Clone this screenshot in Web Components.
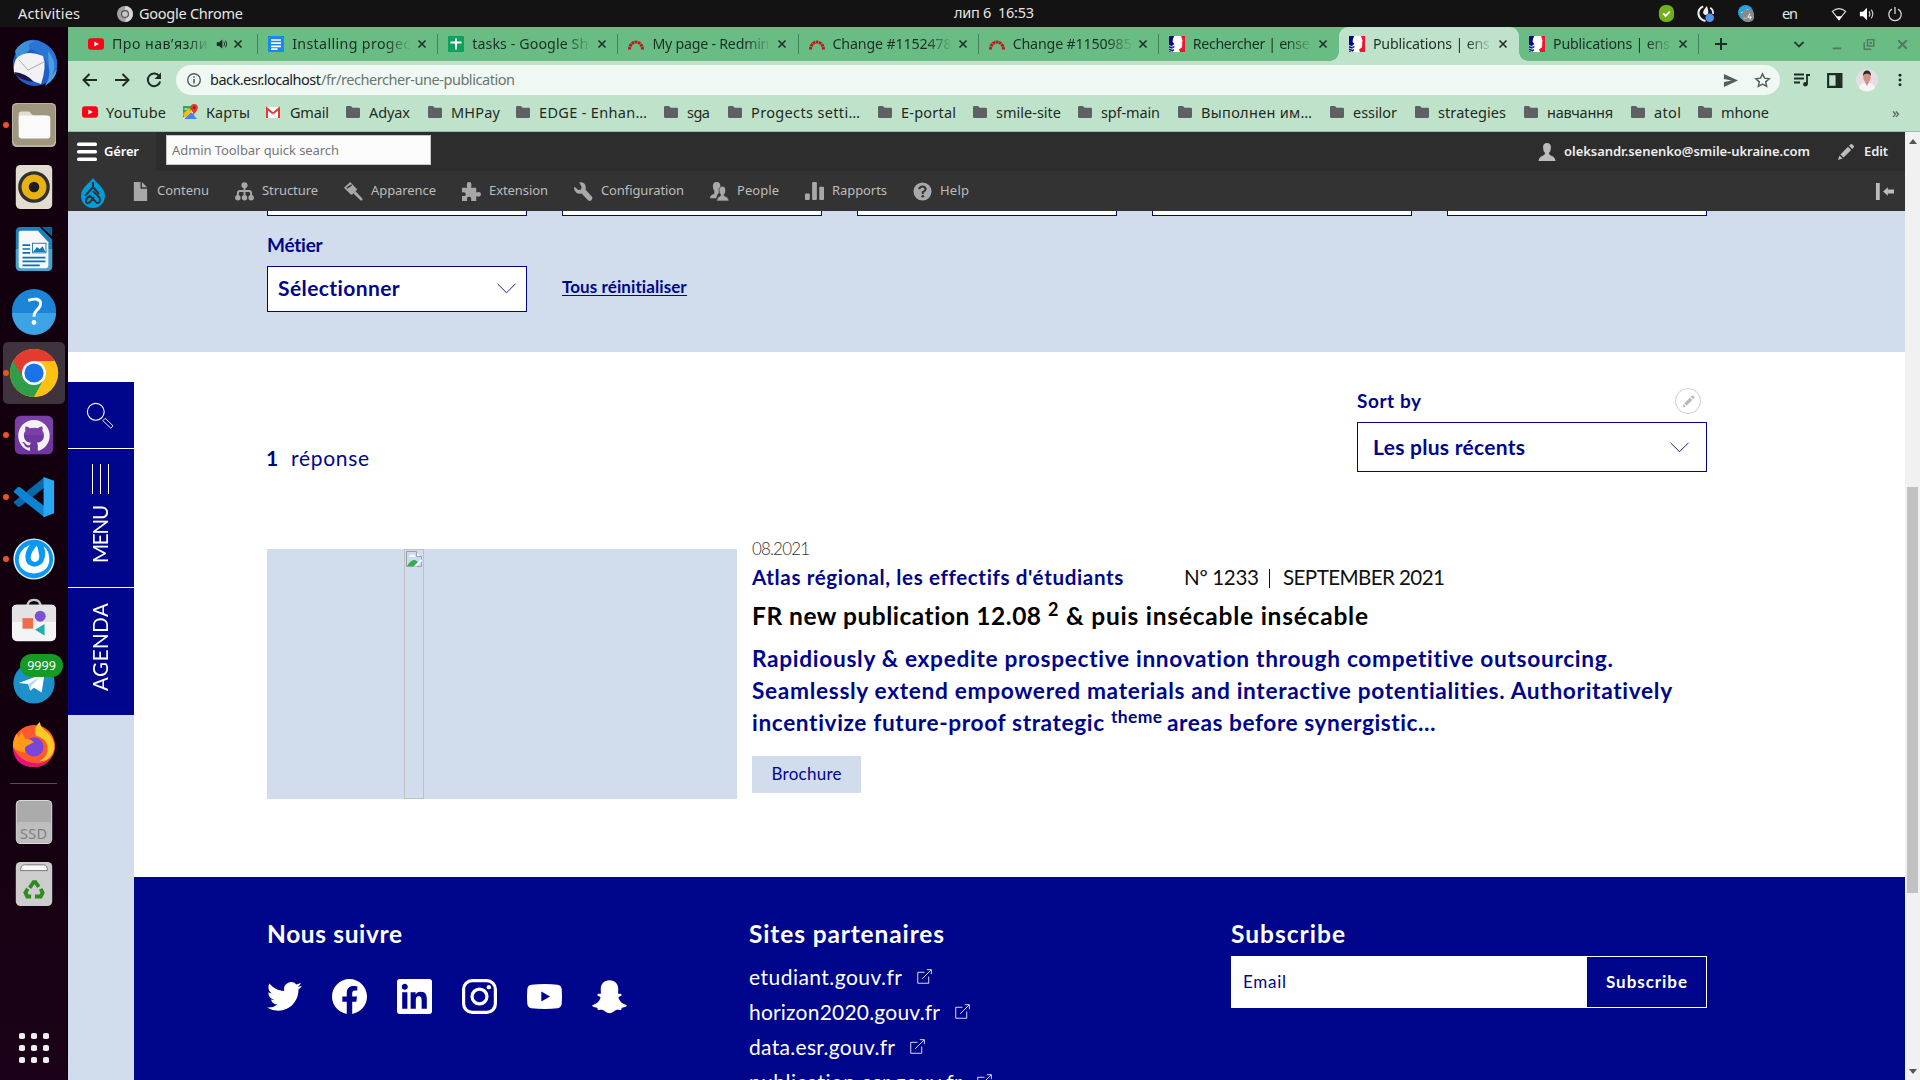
<!DOCTYPE html>
<html lang="fr">
<head>
<meta charset="utf-8">
<title>Publications</title>
<style>
html,body{margin:0;height:100%;overflow:hidden;background:#fff}
body{font-family:"Noto Sans","Liberation Sans",sans-serif}
</style>
</head>
<body>
<desktop-shell></desktop-shell>
<script>
const BLUE='#00068b';
const define=(name,html,after)=>{
  const tpl=document.createElement('template');
  customElements.define(name,class extends HTMLElement{
    connectedCallback(){
      if(this.shadowRoot)return;
      const root=this.attachShadow({mode:'open'});
      tpl.innerHTML=typeof html==='function'?html(this):html;
      root.appendChild(tpl.content.cloneNode(true));
      if(after)after(this,root);
    }
  });
};

/* Text run tracked to an exact advance width given by its w attribute. */
const ctx=document.createElement('canvas').getContext('2d');
define('fit-text','<style>:host{display:inline-block;white-space:pre;flex:none}</style><slot></slot>',el=>{
  const w=+el.getAttribute('w'),s=getComputedStyle(el),t=el.textContent;
  ctx.font=`${s.fontWeight} ${s.fontSize} ${s.fontFamily}`;
  el.style.letterSpacing=((w-ctx.measureText(t).width)/Math.max(1,t.length-1)).toFixed(3)+'px';
  if(!el.hasAttribute('vertical'))el.style.width=w+'px';else el.style.height=w+'px';
});

const folder='<path d="M1 3.2Q1 2 2.2 2H6l1.6 1.8h6.2Q15 3.8 15 5v7.800Q15 14 13.800 14H2.200Q1 14 1 12.800z" fill="#5f6064"/>';
const marianne='<path fill="#fff" d="M0 0h16v16H0z"/><path fill="#00068b" d="M0 0h5.200Q3.500 3 3.600 6L5.500 8 3 9.500 6 11 3 12.500 5.500 14 3 16H0z"/><path fill="#f0142f" d="M12 0h4v16h-5l-1-2.500 2.800-2 .5-3-.3-1.500.6-2.500z"/><path d="M0 9.500l4 1.500M0 12l4 1.500M0 14.500l3 1" stroke="#fff" stroke-width=".8"/>';
const redmine='<path d="M1.500 13.500a6.500 7.500 0 0 1 13 0" fill="none" stroke="#c9101d" stroke-width="3" stroke-dasharray="2.600 .6"/>';
const yt='<rect x="0" y="2.200" width="16" height="11.600" rx="3" fill="#ff0016"/><path fill="#fff" d="M6.300 5.400v5.200L10.800 8z"/>';
const pencil='<path d="M2 18l1.400-4.600 3.200 3.200zM4.400 12.400L12 4.800l3.200 3.200-7.600 7.600zM13 3.800l1.400-1.400q1-1 2 0l1.200 1.200q1 1 0 2L16.200 7z" fill="currentColor"/>';
const S='fill="none" stroke="currentColor"';
const I={
youtube:[16,yt],folder:[16,folder],marianne:[16,marianne],redmine:[16,redmine],
docs:[16,'<rect width="16" height="16" rx="1" fill="#1a87f0"/><path d="M3 4h10M3 7.200h10M3 10.400h10M3 13.200h6.500" stroke="#fff" stroke-width="1.700"/>'],
sheets:[16,'<rect width="16" height="16" rx="1" fill="#0fa25c"/><path d="M8 2.500v11M2.500 6.500h11" stroke="#fff" stroke-width="2"/>'],
maps:[16,'<path fill="#34a853" d="M1 2h9l3 13H1z"/><path d="M1 14L12 4l2 2-9 9H1z" fill="#fff"/><path d="M2 15L9 8l6 7z" fill="#4285f4"/><path d="M1 10l6-6 3 3-7 7z" fill="#fbbc05"/><path d="M12.200 0a3.600 3.600 0 0 1 3.600 3.600C15.800 6.500 12.200 10 12.200 10S8.600 6.500 8.600 3.600A3.600 3.600 0 0 1 12.200 0z" fill="#e33b2e"/><circle cx="12.200" cy="3.600" r="1.300" fill="#8c1a12"/><path d="M2.500 5h3" stroke="#fff"/>'],
gmail:[16,'<path fill="#fff" d="M1 3h14v11H1z"/><path d="M2 14V4.500l6 5 6-5V14" fill="none" stroke="#e53b32" stroke-width="2"/><path d="M3.500 13.500L8 9.500l4.500 4" fill="none" stroke="#ddd" stroke-width=".6"/>'],
sound:[16,'<path d="M1 5.500h3L8.500 2v12L4 10.500H1z" fill="currentColor"/><path d="M10.500 5q2 3 0 6M12.800 3.500q3 4.500 0 9" '+S+' stroke-width="1.300"/>'],
close:[16,'<path d="M4 4l8 8M12 4l-8 8" '+S+' stroke-width="1.900"/>'],
plus:[16,'<path d="M8 2v12M2 8h12" '+S+' stroke-width="2"/>'],
chev:[16,'<path d="M3.500 6l4.500 4.500L12.500 6" '+S+' stroke-width="1.800"/>'],
min:[16,'<path d="M3 13h10" '+S+' stroke-width="2"/>'],
restore:[16,'<path d="M6.200 3h7.300v7.300H6.200zM2.500 6v8h8" '+S+' stroke-width="1.700"/><path d="M8.700 5.500h2.500v2.500H8.700z" fill="currentColor"/>'],
back:[20,'<path d="M17 10H4M9.500 4L3.500 10l6 6" '+S+' stroke-width="2"/>'],
fwd:[20,'<path d="M3 10h13M10.500 4l6 6-6 6" '+S+' stroke-width="2"/>'],
reload:[20,'<path d="M15.500 6.500A6.300 6.300 0 1 0 16.200 11.500" '+S+' stroke-width="2"/><path d="M17 2.500v6.500h-6.500z" fill="currentColor"/>'],
info:[16,'<circle cx="8" cy="8" r="6.300" '+S+' stroke-width="1.400"/><path d="M8 7v4.500M8 4.200v1.600" '+S+' stroke-width="1.600"/>'],
send:[16,'<path d="M1 1l15 7-15 7V9.500L9 8 1 6.500z" fill="currentColor"/>'],
star:[16,'<path d="M8 1.800l1.900 4 4.400.5-3.300 3 .9 4.300L8 11.500l-3.900 2.100.9-4.300-3.300-3 4.400-.5z" '+S+' stroke-width="1.400"/>'],
playlist:[16,'<path d="M0 2.500h10M0 6.500h10M0 10.500h6M13 12V3h3" '+S+' stroke-width="1.800"/><circle cx="11.400" cy="12.200" r="2.300" fill="currentColor"/>'],
panel:[16,'<path d="M2 2h12.500v12H2z" '+S+' stroke-width="2"/><path d="M9 2h5v12H9z" fill="currentColor"/>'],
dots:[16,'<g fill="currentColor"><circle cx="8" cy="2.500" r="1.700"/><circle cx="8" cy="8" r="1.700"/><circle cx="8" cy="13.500" r="1.700"/></g>'],
avatar:[22,'<circle cx="11" cy="11" r="11" fill="#e6dce4"/><path d="M3 19q1-4 5-5h6q4 1 5 5A11 11 0 0 1 3 19z" fill="#f7f4f6"/><ellipse cx="11" cy="8.500" rx="3.700" ry="5" fill="#d5917f"/><path d="M7 7q0-5.500 4-5.500T15 7q-1-2.500-4-2.500T7 7z" fill="#332629"/><path d="M9 13h4l-2 4z" fill="#cf8c7c"/>'],
chromegrey:[18,'<circle cx="9" cy="9" r="9" fill="#a2a2a2"/><path d="M9 0a9 9 0 0 1 8 5H9zM9 18a9 9 0 0 0 8-13h-5z" fill="#d5d5d5"/><circle cx="9" cy="9" r="4.600" fill="#555"/><circle cx="9" cy="9" r="3.200" fill="#c6c6c6"/>'],
skype:[18,'<rect x="1" y="0" width="16" height="18" rx="7" fill="#6fb01c"/><path d="M5.500 9l2.500 2.500 4.500-4.500" fill="none" stroke="#fff" stroke-width="2"/>'],
mattray:[18,'<path d="M6.500 1.500Q1 4 1.500 9.500 2.500 15.500 9 17" fill="none" stroke="#eee" stroke-width="2.200"/><path d="M10.500 1Q6 6 6.500 8.500q.8 2.300 3 2 2.500-.3 2.500-3Q12 5 10.500 1z" fill="#eee"/><path d="M14 3q3.500 2.500 3 6.500" fill="none" stroke="#eee" stroke-width="2"/><circle cx="13.500" cy="13.500" r="4.500" fill="#5294f5"/>'],
teletray:[18,'<circle cx="8" cy="8" r="8" fill="#27a3dc"/><path d="M3 8l8-4-2 8-3-2z" fill="#fff"/><rect x="4" y="5" width="13" height="13" rx="5" fill="#868a8c"/><path d="M6 14h1M8 14h1" stroke="#fff" stroke-width="1"/><path d="M12.500 9l-2 4h4M13 11.500v3.500" fill="none" stroke="#fff"/>'],
wifi:[18,'<path d="M1.500 6Q9 0 16.500 6L9 15.500z" fill="none" stroke="#ddd" stroke-width="1.300"/><path d="M5.500 11.500h7L9 16z" fill="#fff"/>'],
vol:[18,'<path d="M1 6.500h3.500L9 2v14l-4.500-4.500H1z" fill="#fff"/><path d="M11.300 6q2 3 0 6M13.800 4q3.400 5 0 10" fill="none" stroke="#ccc" stroke-width="1.300"/>'],
power:[18,'<path d="M5.500 3.500a7 7 0 1 0 7 0M9 1v8" fill="none" stroke="#ddd" stroke-width="1.400"/>'],
burger:[20,'<g fill="#fff"><rect y=".5" width="20" height="3.600" rx="1.500"/><rect y="8" width="20" height="3.600" rx="1.500"/><rect y="15.500" width="20" height="3.600" rx="1.500"/></g>'],
user:[20,'<path d="M10 0q4.400 0 4.400 5 0 4-2.200 6 0 2.500 2.500 3.200Q19 15.600 19.500 20H.5Q1 15.600 5.300 14.200q2.500-.7 2.500-3.200-2.200-2-2.200-6Q5.600 0 10 0z" fill="currentColor"/>'],
pencil:[20,pencil],
drupal:[30,'<path d="M15 0c2 4 12 9 12 18a12 12 0 0 1-24 0C3 9 13 4 15 0z" fill="#009cde"/><path d="M15 4v5l6 7M15 9l-8 9M15 13c2 3 7 5 7 9 0 3-3 4-4 2l-6-6c-2 1-4 3-4 5 0 2 2 3 4 1l4-5" fill="none" stroke="#333" stroke-width="2"/>'],
content:[20,'<path d="M3 0h7v7h7v13H3zM11.500 0L17 5.500h-5.500z" fill="currentColor"/>'],
structure:[20,'<circle cx="10" cy="3.400" r="3.200" fill="currentColor"/><path d="M10 5v10M3 15v-3q0-2.500 2.500-2.500h9Q17 9.500 17 12v3" '+S+' stroke-width="2"/><g fill="currentColor"><circle cx="3" cy="16.500" r="2.900"/><circle cx="10" cy="16.500" r="2.900"/><circle cx="17" cy="16.500" r="2.900"/></g>'],
appearance:[20,'<path d="M0 6L6.500 0 14 8l-5.500 5.500q-2-.5-3-2z" fill="currentColor"/><path d="M3 6.500L8 3" stroke="#333" stroke-width="1.500"/><path d="M10 12l2-2.500 7.500 8q.5 2.500-2 2z" fill="currentColor"/>'],
extension:[20,'<path d="M0 6h5.500Q4 0 7.500 0T9.500 6H15v5q5-1.500 5 2t-5 2v5H9.500q1-4.500-2-4.500T5.500 20H0v-5.500q4 1 4-1.700T0 11z" fill="currentColor"/>'],
config:[20,'<path d="M5.500.5q6-1 7 5 0 1.500-.5 2.500l7 7.500q1 2-.5 3.500t-3.500.5L8 12q-6 1.500-8-5 0-1.500.5-2l4 3.500 3-.5.500-3z" fill="currentColor"/>'],
people:[20,'<path d="M7 0q4 0 4 4.500 0 2.500-1.500 4.500v2l-2 3-1 3H0q0-3.500 4.500-4.500V9Q3 7.500 3 4.500 3 0 7 0z" fill="currentColor"/><path d="M13 4.500q3.500 0 3.500 4.500 0 2.500-1.500 4v1.500q4.500 1 5 5.500H7q0-4 4-5.500V13Q9.500 11.500 9.500 9 9.500 4.500 13 4.500z" fill="currentColor" stroke="#333" stroke-width=".7"/>'],
reports:[20,'<g fill="currentColor"><rect y="12" width="5" height="7" rx="1"/><rect x="7.500" y="0" width="5" height="19" rx="1"/><rect x="15" y="5" width="5" height="14" rx="1"/></g>'],
help:[20,'<circle cx="10" cy="10" r="9.500" fill="currentColor"/><path d="M6.500 7.500Q7 4.700 10 4.700T13.300 7.500Q13.300 9 10.300 10.700V12.500" fill="none" stroke="#333" stroke-width="2.200"/><circle cx="10.300" cy="15" r="1.400" fill="#333"/>'],
collapse:[20,'<path d="M1 1h4v18H1zM8.500 10l5-4.500V8H20v4h-6.500v2.500z" fill="currentColor"/>'],
chevthin:[20,'<path d="M.5 5l9.500 9.500L19.500 5" '+S+' stroke-width=".95"/>'],
search:[30,'<circle cx="10.500" cy="10.500" r="9" fill="none" stroke="#fff" stroke-width="1.200"/><path d="M18 20l2.500-2.500 8.500 8-2.500 2.500z" fill="none" stroke="#fff"/>'],
broken:[16,'<path d="M.5.500h10l5 5v10H.5z" fill="#c9dcf7" stroke="#9aa0a6"/><path d="M10.500.5v5h5" fill="#fff" stroke="#9aa0a6"/><path d="M3 6q0-2 2-2 2-1.500 3 .5 1.500 0 1.500 1.500z" fill="#fff"/><path d="M1 15q4-7 8-6l3 2-4 4z" fill="#37ad4b"/><path d="M15.500 8L8 15.500h2.500L16 10z" fill="#fff"/>'],
ext:[16,'<path d="M8 3.500H.8v11.700h11.700V8M5.500 10.500L15 1M10.500.7h4.800v4.800" fill="none" stroke="#fff" stroke-width=".9"/>'],
twitter:[24,'<path fill="#fff" d="M23.953 4.570a10 10 0 01-2.825.775 4.958 4.958 0 002.163-2.723c-.951.555-2.005.959-3.127 1.184a4.920 4.920 0 00-8.384 4.482C7.690 8.095 4.067 6.130 1.640 3.162a4.822 4.822 0 00-.666 2.475c0 1.710.87 3.213 2.188 4.096a4.904 4.904 0 01-2.228-.616v.06a4.923 4.923 0 003.946 4.827 4.996 4.996 0 01-2.212.085 4.936 4.936 0 004.604 3.417 9.867 9.867 0 01-6.102 2.105c-.39 0-.779-.023-1.170-.067a13.995 13.995 0 007.557 2.209c9.053 0 13.998-7.496 13.998-13.985 0-.21 0-.42-.015-.63A9.935 9.935 0 0024 4.590z"/>'],
facebook:[24,'<path fill="#fff" d="M24 12.073c0-6.627-5.373-12-12-12s-12 5.373-12 12c0 5.990 4.388 10.954 10.125 11.854v-8.385H7.078v-3.470h3.047V9.430c0-3.007 1.792-4.669 4.533-4.669 1.312 0 2.686.235 2.686.235v2.953H15.830c-1.491 0-1.956.925-1.956 1.874v2.250h3.328l-.532 3.470h-2.796v8.385C19.612 23.027 24 18.062 24 12.073z"/>'],
linkedin:[24,'<path fill="#fff" d="M20.447 20.452h-3.554v-5.569c0-1.328-.027-3.037-1.852-3.037-1.853 0-2.136 1.445-2.136 2.939v5.667H9.351V9h3.414v1.561h.046c.477-.9 1.637-1.850 3.370-1.850 3.601 0 4.267 2.370 4.267 5.455v6.286zM5.337 7.433c-1.144 0-2.063-.926-2.063-2.065 0-1.138.92-2.063 2.063-2.063 1.140 0 2.064.925 2.064 2.063 0 1.139-.925 2.065-2.064 2.065zm1.782 13.019H3.555V9h3.564v11.452zM22.225 0H1.771C.792 0 0 .774 0 1.729v20.542C0 23.227.792 24 1.771 24h20.451C23.200 24 24 23.227 24 22.271V1.729C24 .774 23.200 0 22.222 0h.003z"/>'],
instagram:[24,'<rect x="1.100" y="1.100" width="21.800" height="21.800" rx="6" fill="none" stroke="#fff" stroke-width="2.200"/><circle cx="12" cy="12" r="5.100" fill="none" stroke="#fff" stroke-width="2.200"/><circle cx="18.400" cy="5.600" r="1.500" fill="#fff"/>'],
youtubew:[24,'<path fill="#fff" fill-rule="evenodd" d="M3 4Q12 3 21 4q2.500.3 2.800 3 .4 5 0 10-.3 2.700-2.800 3-9 1-18 0Q.5 19.700.2 17-.2 12 .2 7 .5 4.300 3 4zM9.800 8.500v7l6-3.500z"/>'],
snapchat:[24,'<path fill="#fff" d="M12 .8c3.800 0 6 2.600 6 6l-.1 3.300c.8.300 1.500-.3 2.100.1.800.6 0 1.400-1 1.800-.8.300-1 .7-.6 1.600 1 2.300 2.700 3.600 5 4.200.6.200.5.700 0 1-.8.500-2 .7-2.900.9-.4.300-.2 1.200-.7 1.500-.9.300-2-.3-3.200.1-1.500.6-2.500 2.200-4.600 2.200s-3.100-1.600-4.600-2.200c-1.200-.4-2.300.2-3.200-.1-.5-.3-.3-1.200-.7-1.500-.9-.2-2.100-.4-2.900-.9-.5-.3-.6-.8 0-1 2.300-.6 4-1.900 5-4.200.4-.9.200-1.300-.6-1.600-1-.4-1.800-1.200-1-1.800.6-.4 1.300.2 2.100-.1L6 6.800c0-3.400 2.200-6 6-6z"/>'],
/* Dock applications, each drawn on a 48 unit canvas */
thunderbird:[48,'<circle cx="25" cy="25" r="22" fill="#1f5fc4"/><path d="M14 3q10-5 20 1 14 8 13 24-1 13-12 18 6-8 4-16-3-14-18-20l-9-2z" fill="#2a74d6"/><path d="M38 12q10 12 4 24l5-6q-1 10-12 17 6-10 4-18z" fill="#4a9fe2"/><path d="M5 12Q12 0 25 2q-8 2-6 6 2 3-2 5-5 2-9 12z" fill="#3c91d8"/><path d="M6 20Q16 10 33 17q4 10-2 28-14-4-27-11-1-8 2-14z" fill="#f2f2f4"/><path d="M9 21l9 10 16-8" fill="none" stroke="#a9a9b0"/><path d="M4 33q12 1 20 10-16-2-20-10z" fill="#211245"/>'],
files:[48,'<rect x="1" y="1" width="46" height="46" rx="5" fill="#bdb6a3"/><rect x="2" y="2" width="44" height="43" rx="5" fill="#9e967f"/><path d="M8 13q0-3 3-3h8l4 4h13v8H8z" fill="#e3ded0"/><rect x="8" y="14" width="33" height="24" rx="3" fill="#fafafa"/>'],
rhythm:[48,'<rect x="5" y="1" width="38" height="46" rx="5" fill="#e2ddcf"/><circle cx="24" cy="24" r="16.500" fill="#2f2f35"/><circle cx="24" cy="24" r="13" fill="#e8b310"/><circle cx="24" cy="24" r="5.500" fill="#1d1d1f"/>'],
writer:[48,'<path d="M10 1h20l13 13v28q0 5-5 5H10q-5 0-5-5V6q0-5 5-5z" fill="#1b82b8"/><path d="M5 24h38v18q0 5-5 5H10q-5 0-5-5z" fill="#48a3cf"/><path d="M10 5h18l11 12v24q0 3-3 3H11q-3 0-3-3V8q0-3 2-3z" fill="#f8f8f8"/><path d="M32 1h11v10z" fill="#0e6496"/><path d="M12 20h8M12 24h8M12 28h8M12 33h24M12 37h24M12 41h18" stroke="#0b72b2" stroke-width="1.800"/><rect x="22.500" y="18" width="14" height="10" fill="#fff" stroke="#1a7bb4"/><path d="M23 27l4-5 3 2 3-3 3 6z" fill="#1a7bb4"/>'],
helpapp:[48,'<circle cx="24" cy="24" r="23" fill="#1c84d6"/><path d="M1 26h46a23 23 0 0 1-46 0z" fill="#3ba3e6"/><path d="M18 13q12-4 13 3 0 4-4 7-3 3-3 7" fill="none" stroke="#fff" stroke-width="3"/><circle cx="24" cy="36" r="2.500" fill="#fff"/>'],
chrome:[48,'<circle cx="24" cy="24" r="24" fill="#f7bb16"/><path d="M24 24L3.200 12a24 24 0 0 0 21 36l10-18z" fill="#2e9e4b"/><path d="M3.200 12a24 24 0 0 1 41.600 0H24L14 30z" fill="#e33b2e"/><path d="M24 12h20.800A24 24 0 0 1 24 48l10-18z" fill="#fcc112"/><circle cx="24" cy="24" r="12" fill="#fff"/><circle cx="24" cy="24" r="9.600" fill="#1a73e8"/>'],
github:[48,'<rect x="4" y="4" width="40" height="40" rx="6" fill="#7b3fa8"/><path d="M4 24h40v14q0 6-6 6H10q-6 0-6-6z" fill="#683298" opacity=".6"/><g transform="translate(7.500 8) scale(1.370)"><path fill="#f5f2f5" d="M12 .297c-6.630 0-12 5.373-12 12 0 5.303 3.438 9.800 8.205 11.385.6.113.82-.258.82-.577 0-.285-.01-1.040-.015-2.040-3.338.724-4.042-1.610-4.042-1.610C4.422 18.070 3.633 17.700 3.633 17.700c-1.087-.744.084-.729.084-.729 1.205.084 1.838 1.236 1.838 1.236 1.070 1.835 2.809 1.305 3.495.998.108-.776.417-1.305.76-1.605-2.665-.3-5.466-1.332-5.466-5.930 0-1.310.465-2.380 1.235-3.220-.135-.303-.54-1.523.105-3.176 0 0 1.005-.322 3.300 1.230.96-.267 1.980-.399 3-.405 1.020.006 2.040.138 3 .405 2.280-1.552 3.285-1.230 3.285-1.230.645 1.653.24 2.873.12 3.176.765.84 1.230 1.910 1.230 3.220 0 4.610-2.805 5.625-5.475 5.920.42.36.81 1.096.81 2.220 0 1.606-.015 2.896-.015 3.286 0 .315.21.69.825.57C20.565 22.092 24 17.592 24 12.297c0-6.627-5.373-12-12-12"/></g>'],
vscode:[48,'<path d="M3 18l4-4q1-1 2.500 0L35 34v11L3 19z" fill="#0d83d1"/><path d="M3 30l4 4q1 1 2.500 0L35 14V3L3 29z" fill="#0868ab"/><path d="M3 18l4-4q1-1 2.500 0L22 24 35 34v11L12 27z" fill="#0d83d1"/><path d="M34 3l11 4v34l-11 4z" fill="#2ba8f2"/>'],
matter:[48,'<circle cx="24" cy="24" r="21.500" fill="#e8eef2"/><circle cx="24" cy="24" r="20" fill="#0a98f5"/><path d="M20 9Q8 14 8 25q1 13 16 14 15-1 16-14 0-10-6-14 3 7 1 12-2 9-11 9-9-1-9-10 0-7 5-13z" fill="#fff"/><path d="M27 10q-7 8-6.500 13 .8 4 4.500 4 4.500-.5 4.500-5.500 0-3-2.500-11.500z" fill="#fff"/>'],
software:[48,'<path d="M17 10q0-8 7-8t7 8" fill="none" stroke="#c5c5c5" stroke-width="2.500"/><rect x="1" y="7" width="46" height="38" rx="5" fill="#f4f4f4"/><path d="M1 25V12q0-5 5-5h36q5 0 5 5v13z" fill="#e3e3e3"/><rect x="12" y="21" width="11" height="11" fill="#f26a4c"/><circle cx="30.500" cy="19" r="5.700" fill="#7b4fd6"/><path d="M35 27v12l-10-6z" fill="#22adb2"/>'],
telegram:[48,'<circle cx="24" cy="24" r="21.500" fill="#1b90cb"/><path d="M8 24L35 14l-3 20-8-5-4 3-2-7z" fill="#fff"/><path d="M18 25l13-8-10 10-1 5z" fill="#bcd9ea"/>'],
firefox:[48,'<circle cx="24" cy="25" r="22" fill="#ff5a2c"/><path d="M2 26q1 21 22 21 14 0 20-13-6 9-16 9Q10 43 2 26z" fill="#e8127c"/><path d="M26 14q-3-8 4-14 1 6 7 10 9 7 8 18-3 13-15 13 10-6 8-16-2-8-12-11z" fill="#ffc928"/><circle cx="24" cy="26" r="10" fill="#7a46d8"/><path d="M2 26q0-9 4-14l2 4 3-6 4 8q5-1 9 3l-6 3q-5 2-3 8-9-1-13-6z" fill="#ff9a1a"/>'],
ssd:[48,'<rect x="5" y="1" width="38" height="46" rx="5" fill="#d9d9d9"/><rect x="6" y="2" width="36" height="44" rx="4" fill="#ababab"/><rect x="6" y="24" width="36" height="22" rx="4" fill="#bebebe"/>'],
trash:[48,'<rect x="5" y="1" width="38" height="46" rx="5" fill="#cdcdcd"/><path d="M10 10q0-6 4-6h20q4 0 4 6z" fill="#f9f9f9" stroke="#777"/><g fill="none" stroke="#2f8a22" stroke-width="4"><path d="M19.500 28l4-6h2l3.500 5"/><path d="M31 29l2 4-2 4h-6"/><path d="M21 37h-4l-2-4 2.500-4"/></g>'],
apps:[48,'<g fill="#efefef">'+[0,1,2].map(y=>[0,1,2].map(x=>`<rect x="${9+x*12}" y="${9+y*12}" width="6" height="6" rx="1.800"/>`).join('')).join('')+'</g>']
};
define('ui-icon',el=>{
  const [v,m]=I[el.getAttribute('name')],s=el.getAttribute('size')||v;
  return `<style>:host{display:block;flex:none;width:${s}px;height:${s}px}svg{display:block;width:100%;height:100%;overflow:visible}</style><svg viewBox="0 0 ${v} ${v}">${m}</svg>`;
});

/* Row cell: a fixed width flex item holding an icon and a tracked label. */
const cell=(x,next,icon,size,gap,text,w)=>`<div class="cell" style="width:${next-x}px"><ui-icon name="${icon}" size="${size}"></ui-icon>${text?`<fit-text w="${w}" style="margin-left:${gap}px">${text}</fit-text>`:''}</div>`;

define('gnome-bar',`<style>
:host{display:flex;align-items:center;height:27px;background:#131313;color:#e6e6e6;font:14.500px/27px "Noto Sans",sans-serif}
.l{display:flex;align-items:center;width:954px;padding-left:18px;box-sizing:border-box}.r{display:flex;align-items:center;margin-left:624px}
fit-text{height:28px}
</style><div class="l"><fit-text w="62">Activities</fit-text><ui-icon name="chromegrey" size="16" style="margin:0 6px 0 37px"></ui-icon><fit-text w="104">Google Chrome</fit-text></div>
<fit-text w="80" style="height:29px">лип 6  16:53</fit-text>
<div class="r"><ui-icon name="skype" size="17"></ui-icon><ui-icon name="mattray" size="17" style="margin-left:22px"></ui-icon><ui-icon name="teletray" size="17" style="margin-left:24px"></ui-icon><fit-text w="16" style="margin-left:27px">en</fit-text><ui-icon name="wifi" size="16" style="margin-left:33px"></ui-icon><ui-icon name="vol" size="16" style="margin-left:12px"></ui-icon><ui-icon name="power" size="16" style="margin-left:12px"></ui-icon></div>`);

const dock=[['thunderbird'],['files',1],['rhythm'],['writer'],['helpapp'],['chrome',1,1],['github',1],['vscode',1],['matter',1],['software'],['telegram'],['firefox']];
define('app-dock',`<style>
:host{display:flex;flex-direction:column;width:68px;height:1053px;box-sizing:border-box;padding-top:5px;background:linear-gradient(#12000e,#13000f 70%,#1b0218);border-right:1px solid #080006}
.s{position:relative;height:62px;display:flex;align-items:center;justify-content:center;border-radius:5px;margin:0 2px 0 3px;flex:none}
.s ui-icon{margin:-1px 1px 0 0}
.on{background:#3f333d}
.d:before{content:"";position:absolute;left:0;top:28px;width:6px;height:6px;border-radius:3px;background:#e95420}
.line{height:1px;margin:7px 10px 7px;background:#5a4c58;flex:none}
.badge{position:absolute;right:2px;top:2px;width:43px;height:23px;border-radius:12px;background:#149a25;color:#fff;font:12.500px/23px "Noto Sans";text-align:center}
.ssd{position:absolute;left:17px;bottom:11px;font:14.500px/18px "Noto Sans";color:#808080}
.apps{margin-top:auto;margin-bottom:1px}
</style>${dock.map(([n,d,on])=>`<div class="s ${d?'d':''} ${on?'on':''}"><ui-icon name="${n}" size="${n==='chrome'||n==='thunderbird'?48:46}"></ui-icon>${n==='telegram'?'<span class="badge">9999</span>':''}</div>`).join('')}<div class="line"></div><div class="s"><ui-icon name="ssd" size="46"></ui-icon><span class="ssd"><fit-text w="27">SSD</fit-text></span></div><div class="s"><ui-icon name="trash" size="46"></ui-icon></div><div class="s apps"><ui-icon name="apps" size="48"></ui-icon></div>`);

const tabs=[['youtube',"Про нав’язлив",104],['docs','Installing progec',118],['sheets','tasks - Google Sh',116],['redmine','My page - Redmin',117],['redmine','Change #1152478',119],['redmine','Change #1150985',119],['marianne','Rechercher | ense',117],['marianne','Publications | ens',117,1],['marianne','Publications | ens',117]];
define('tab-strip',`<style>
:host{display:flex;height:34px;padding-left:10px;background:#69bd84;color:#1f2d26;font:14.200px/34px "Noto Sans",sans-serif}
.t{display:flex;align-items:center;width:180.125px;padding-left:10px;box-sizing:border-box;position:relative;flex:none}
.t:after{content:"";position:absolute;right:0;top:7px;width:1px;height:20px;background:#43835a}
.t.pre:after,.on:after{display:none}
.on{background:#bfe3ca;border-radius:9px 9px 0 0}
.on:before{content:"";position:absolute;left:-9px;right:-9px;bottom:0;height:9px;background:radial-gradient(circle at 0 0,transparent 8.500px,#bfe3ca 9px) left/9px 9px no-repeat,radial-gradient(circle at 100% 0,transparent 8.500px,#bfe3ca 9px) right/9px 9px no-repeat}
.x{width:120px;overflow:hidden;margin-left:8px;flex:none;-webkit-mask:linear-gradient(90deg,#000 78%,transparent);mask:linear-gradient(90deg,#000 78%,transparent)}
.a .x{width:98px}
.c{margin-left:3px}.w{display:flex;align-items:center;color:#55775f}
</style>${tabs.map(([i,t,w,on],k)=>`<div class="t ${on?'on':''} ${k===6?'pre':''} ${k?'':'a'}"><ui-icon name="${i}" size="16"></ui-icon><span class="x"><fit-text w="${w}">${t}</fit-text></span>${k?'':'<ui-icon name="sound" size="12" style="margin-left:6px"></ui-icon>'}<ui-icon class="c" name="close" size="14"></ui-icon></div>`).join('')}
<div class="w"><ui-icon name="plus" size="16" style="margin-left:14px;color:#1f2d26"></ui-icon><ui-icon name="chev" size="16" style="margin-left:62px;color:#23402e"></ui-icon><ui-icon name="min" size="14" style="margin-left:23px"></ui-icon><ui-icon name="restore" size="14" style="margin-left:18px"></ui-icon><ui-icon name="close" size="17" style="margin-left:18px"></ui-icon></div>`);

define('address-bar',`<style>
:host{display:flex;align-items:center;height:38px;background:#bfe3ca;color:#202b25;padding-left:12px;font:14.500px/28px "Noto Sans",sans-serif}
.o{display:flex;align-items:center;width:1604px;height:30px;border-radius:15px;background:#eff8f2;margin-left:12px;box-sizing:border-box;padding:0 10px;color:#55605a}
b{font-weight:400;color:#1b221e}.g{color:#6b7670}fit-text{display:block;height:30px}
</style><ui-icon name="back" size="20"></ui-icon><ui-icon name="fwd" size="20" style="margin-left:12px"></ui-icon><ui-icon name="reload" size="20" style="margin-left:12px"></ui-icon>
<div class="o"><ui-icon name="info" size="16"></ui-icon><b style="margin-left:8px;display:flex"><fit-text w="111">back.esr.localhost</fit-text></b><span class="g"><fit-text w="194">/fr/rechercher-une-publication</fit-text></span><ui-icon name="send" size="15" style="margin-left:auto"></ui-icon><ui-icon name="star" size="17" style="margin:0 -1px 0 16px"></ui-icon></div>
<ui-icon name="playlist" size="16" style="margin-left:14px"></ui-icon><ui-icon name="panel" size="17" style="margin-left:16px"></ui-icon><ui-icon name="avatar" size="22" style="margin-left:13px"></ui-icon><ui-icon name="dots" size="14" style="margin-left:15px"></ui-icon>`);

const bm=[['youtube','YouTube',83,106,166],['maps','Карты',183,206,250],['gmail','Gmail',266,290,329],['folder','Adyax',346,369,410],['folder','MHPay',428,451,500],['folder','EDGE - Enhan…',516,539,647],['folder','sga',664,687,710],['folder','Progects setti…',728,751,860],['folder','E-portal',878,901,956],['folder','smile-site',973,996,1061],['folder','spf-main',1078,1101,1160],['folder','Выполнен им…',1178,1201,1312],['folder','essilor',1330,1353,1397],['folder','strategies',1415,1438,1506],['folder','навчання',1524,1547,1613],['folder','atol',1631,1654,1681],['folder','mhone',1698,1721,1769]];
define('bookmark-bar',`<style>
:host{display:flex;align-items:center;height:33px;box-sizing:border-box;padding:0 0 6px 14px;background:#bfe3ca;border-bottom:1px solid #9dbba6;color:#1f2925;font:14.500px/26px "Noto Sans",sans-serif}
.cell{display:flex;align-items:center;flex:none}fit-text{height:27px}
</style>${bm.map(([i,t,x,tx,e],k)=>cell(x,bm[k+1]?bm[k+1][2]:1893,i,16,tx-x-15,t,e-tx)).join('')}<fit-text w="10" style="font-size:15px;color:#4c5a51">»</fit-text>`);

const menu=[['content','Contenu',131,157,209],['structure','Structure',235,262,318],['appearance','Apparence',344,371,436],['extension','Extension',462,489,548],['config','Configuration',574,601,684],['people','People',710,737,779],['reports','Rapports',805,832,887],['help','Help',913,940,969]];
define('admin-toolbar',`<style>
:host{display:block;color:#fff;font:13px/39px "Noto Sans",sans-serif}
.top{display:flex;align-items:center;height:39px;background:#2d2d2d}
.tab{display:flex;align-items:center;width:88px;height:39px;background:#333;padding-left:9px;box-sizing:border-box;font-weight:600}
.in{width:265px;height:30px;box-sizing:border-box;border:1px solid #c6c6c6;background:#fcfcfc;color:#777;margin-left:10px;padding-left:5px;font:13px/29px "Noto Sans";margin-top:-3px}
.u{display:flex;align-items:center;margin-left:auto;padding-right:17px;font-weight:600;color:#eee}
.u ui-icon{color:#bcbcbc}
.tray{display:flex;align-items:center;height:40px;background:#333;color:#bcbcbc;padding-left:10px;line-height:36px}
.cell{display:flex;align-items:center;color:#bcbcbc}.cell fit-text{height:38px}.cell ui-icon{color:#a8a8a8}
</style><div class="top"><div class="tab"><ui-icon name="burger" size="20"></ui-icon><fit-text w="35" style="margin-left:7px">Gérer</fit-text></div><div class="in"><fit-text w="167">Admin Toolbar quick search</fit-text></div>
<div class="u"><ui-icon name="user" size="18"></ui-icon><fit-text w="246" style="margin-left:8px">oleksandr.senenko@smile-ukraine.com</fit-text><ui-icon name="pencil" size="20" style="margin-left:26px"></ui-icon><fit-text w="24" style="margin-left:8px">Edit</fit-text></div></div>
<div class="tray"><ui-icon name="drupal" size="30" style="margin-right:23px;margin-top:3px"></ui-icon>${menu.map(([i,t,x,tx,e],k)=>cell(x,menu[k+1]?menu[k+1][2]:1875,i,19,tx-x-19,t,e-tx)).join('')}<ui-icon name="collapse" size="19"></ui-icon></div>`);

define('side-rail',`<style>
:host{display:flex;flex-direction:column;width:66px;flex:none;background:#d1dced}
.gap{height:30px;background:#fff}.b{background:${BLUE};color:#fff;display:flex;flex-direction:column;align-items:center;border-bottom:1px solid #fff;box-sizing:border-box;padding-right:2px;font:20.500px/24px Lato,sans-serif}
fit-text{writing-mode:vertical-rl;transform:rotate(180deg)}
.bars{width:17px;height:30px;box-sizing:border-box;border:solid #fff;border-width:0 1px;background:linear-gradient(#fff,#fff) center/1px 100% no-repeat}
</style><div class="gap"></div><div class="b" style="height:67px;padding-top:20px"><ui-icon name="search" size="28"></ui-icon></div>
<div class="b" style="height:139px;padding-top:15px"><div class="bars"></div><fit-text vertical w="58" style="margin-top:11px">MENU</fit-text></div>
<div class="b" style="height:127px;padding-top:15px;border:0"><fit-text vertical w="88">AGENDA</fit-text></div>`);

define('select-box',el=>`<style>
:host{display:flex;align-items:center;justify-content:space-between;box-sizing:border-box;border:1px solid ${BLUE};background:#fff;color:${BLUE};font:bold 21px/24px Lato,sans-serif}
</style><slot></slot><ui-icon name="chevthin" size="19"></ui-icon>`);

define('filter-panel',`<style>
:host{display:block;height:141px;box-sizing:border-box;background:#d1dced;padding-left:133px;color:${BLUE};font-family:Lato,sans-serif}
.r{display:flex;gap:35px}.c{width:260px;height:5px;box-sizing:border-box;background:#fff;border:1px solid ${BLUE};border-top:0;flex:none}
.l{font:bold 19px/22px Lato;padding:18px 0 9px 0;height:50px;box-sizing:border-box}
.reset{font:bold 17px/20px Lato;display:flex;align-self:center;height:20px;margin-top:-5px}
.reset fit-text{border-bottom:1px solid ${BLUE};height:18px;line-height:19px}
select-box{width:260px;height:46px;padding:0 10px 2px 10px}
</style><div class="r"><div class="c"></div><div class="c"></div><div class="c"></div><div class="c"></div><div class="c"></div></div>
<div class="l"><fit-text w="56">Métier</fit-text></div><div class="r"><select-box><fit-text w="122">Sélectionner</fit-text></select-box><div class="reset"><fit-text w="125">Tous réinitialiser</fit-text></div></div>`);

define('result-header',`<style>
:host{display:flex;justify-content:space-between;width:1440px;margin-left:133px;height:197px;color:${BLUE};font:21px/26px Lato,sans-serif}
.n{display:flex;padding-top:93px}.s{width:350px;padding-top:36px}.h{display:flex;justify-content:space-between;align-items:center;height:26px;margin-bottom:8px;padding-right:6px;font-weight:bold;font-size:19px}
.p{width:26px;height:26px;box-sizing:border-box;border:1px solid #ccc;border-radius:50%;display:flex;align-items:center;justify-content:center;color:#bbb}
select-box{height:50px;padding:0 17px 0 15px}
</style><div class="n"><b style="width:24px;margin-left:-1px">1</b><fit-text w="78" style="margin-left:1px">réponse</fit-text></div><div class="s"><div class="h"><fit-text w="64">Sort by</fit-text><span class="p"><ui-icon name="pencil" size="15"></ui-icon></span></div><select-box><fit-text w="152">Les plus récents</fit-text></select-box></div>`);

define('publication-card',`<style>
:host{display:flex;gap:15px;margin-left:133px;height:328px;font-family:Lato,sans-serif;color:${BLUE}}
.i{width:470px;height:250px;background:#d1dced;box-sizing:border-box;padding-left:137px;flex:none}
.f{width:20px;height:250px;border:1px solid #c0c0c0;box-sizing:border-box;padding:1px 1px}
.r{display:flex;white-space:pre}.d{font:300 17px/20px Lato;color:#333;height:18px;margin-top:-10px}
.m{font:bold 20.600px/26px Lato;height:26px;margin-top:7px}.m span{display:flex;font-weight:400;color:#111}
.bar{width:1px;height:19px;background:#111;margin:5px 13px 0 10px}
.t{font:bold 24.500px/32px Lato;color:#000;margin-top:10px;height:32px}
.p{font:bold 22.700px/32px Lato;height:32px}.sup{font-size:17.500px;margin-top:-6px}
.tag{display:flex;width:109px;height:37px;justify-content:center;background:#d1dced;font:17px/36px Lato;margin-top:17px}
</style><div class="i"><div class="f"><ui-icon name="broken" size="16"></ui-icon></div></div>
<div><div class="r d"><fit-text w="58">08.2021</fit-text></div>
<div class="r m"><fit-text w="371">Atlas régional, les effectifs d'étudiants</fit-text><span style="margin-left:61px"><fit-text w="75">Nº 1233</fit-text><i class="bar"></i><fit-text w="162">SEPTEMBER 2021</fit-text></span></div>
<div class="r t"><fit-text w="290">FR new publication 12.08</fit-text><fit-text w="11" style="font-size:18px;margin:-7px 7px 0 6px">2</fit-text><fit-text w="302">&amp; puis insécable insécable</fit-text></div>
<div class="r p" style="margin-top:11px"><fit-text w="863">Rapidiously &amp; expedite prospective innovation through competitive outsourcing.</fit-text></div>
<div class="r p"><fit-text w="923">Seamlessly extend empowered materials and interactive potentialities. Authoritatively</fit-text></div>
<div class="r p"><fit-text w="353">incentivize future-proof strategic</fit-text><fit-text class="sup" w="51" style="margin-left:6px;margin-right:5px">theme</fit-text><fit-text w="269">areas before synergistic…</fit-text></div>
<div class="tag"><fit-text w="70">Brochure</fit-text></div></div>`);

define('page-footer',`<style>
:host{display:flex;height:203px;background:${BLUE};color:#fff;padding-left:133px;font:21px/35px Lato,sans-serif;overflow:hidden;box-sizing:border-box}
.c{width:482px;padding-top:41px;flex:none;box-sizing:border-box}h2{margin:0;font:bold 24.500px/32px Lato;display:flex}
.s{display:flex;gap:30px;margin-top:29px}.l{display:flex;align-items:center;height:35px}.k{padding-top:9px}
.f{display:flex;width:476px;height:52px;border:1px solid #fff;box-sizing:border-box;margin-top:6px}
.e{width:355px;background:#fff;color:${BLUE};padding-left:11px;box-sizing:border-box;font:17px/49px Lato}.b{flex:1;display:flex;justify-content:center;font:bold 17px/49px Lato}
</style><div class="c"><h2><fit-text w="135">Nous suivre</fit-text></h2><div class="s">${['twitter','facebook','linkedin','instagram','youtubew','snapchat'].map(n=>`<ui-icon name="${n}" size="35"></ui-icon>`).join('')}</div></div>
<div class="c"><h2><fit-text w="195">Sites partenaires</fit-text></h2><div class="k">${[['etudiant.gouv.fr',153],['horizon2020.gouv.fr',191],['data.esr.gouv.fr',146],['publication.esr.gouv.fr',213]].map(([t,w])=>`<div class="l"><fit-text w="${w}">${t}</fit-text><ui-icon name="ext" size="15" style="margin-left:15px"></ui-icon></div>`).join('')}</div></div>
<div class="c"><h2><fit-text w="114">Subscribe</fit-text></h2><div class="f"><div class="e"><fit-text w="43">Email</fit-text></div><div class="b"><fit-text w="81">Subscribe</fit-text></div></div></div>`);

define('scroll-bar',`<style>
:host{display:flex;flex-direction:column;align-items:center;width:15px;height:948px;background:#f1f1f1;flex:none}
.u,.d{width:0;height:0;border:4px solid transparent}.u{border-bottom:5px solid #555;border-top:0;margin-top:7px}.d{border-top:5px solid #555;border-bottom:0;margin-top:auto;margin-bottom:6px}
.t{width:11px;height:406px;background:#c1c1c1;margin-top:343px}
</style><div class="u"></div><div class="t"></div><div class="d"></div>`);

define('web-page',`<style>
:host{display:flex;height:948px}.m{width:1837px}.b{display:flex;height:728px}.c{flex:1;background:#fff}
</style><div class="m"><admin-toolbar></admin-toolbar><filter-panel style="padding-left:199px"></filter-panel><div class="b"><side-rail></side-rail><div class="c"><result-header></result-header><publication-card></publication-card><page-footer></page-footer></div></div></div><scroll-bar></scroll-bar>`);

define('desktop-shell',`<style>:host{display:block;width:1920px;height:1080px;overflow:hidden}.r{display:flex}.w{width:1852px}</style>
<gnome-bar></gnome-bar><div class="r"><app-dock></app-dock><div class="w"><tab-strip></tab-strip><address-bar></address-bar><bookmark-bar></bookmark-bar><web-page></web-page></div></div>`);
</script>
</body>
</html>
